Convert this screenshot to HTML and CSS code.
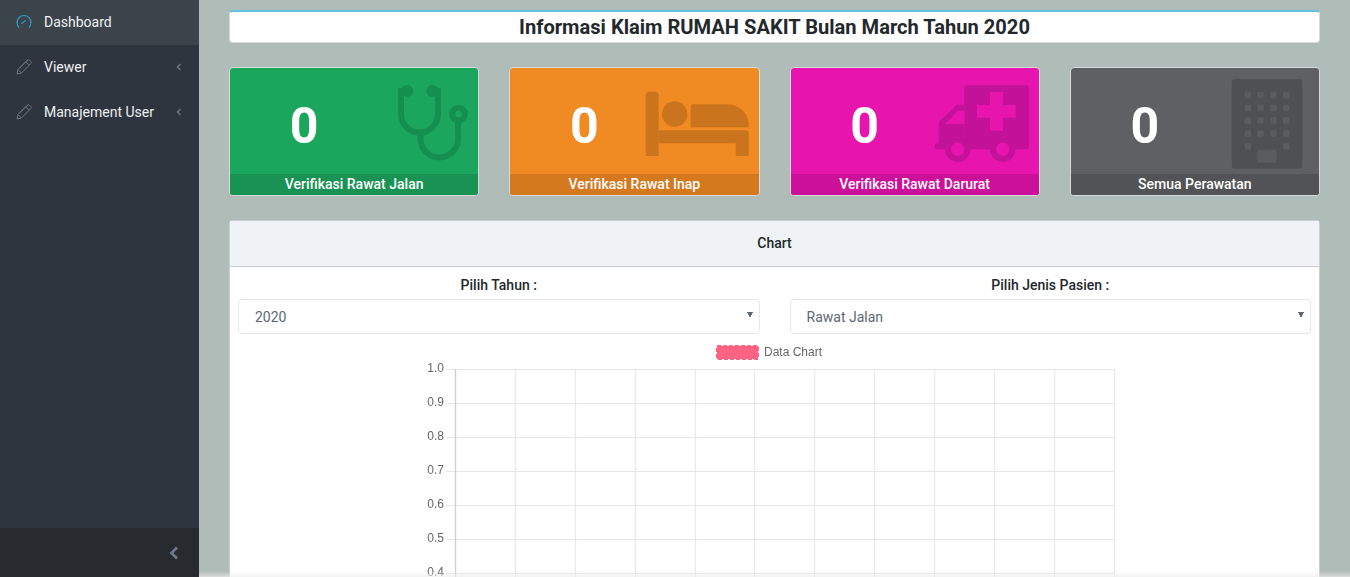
FILE: index.html
```html
<!DOCTYPE html>
<html lang="en">
<head>
  <meta charset="UTF-8">
  <title>Dashboard Klaim</title>
  <link rel="stylesheet" href="styles.css">
</head>
<body>
<div class="app">
  <!-- sidebar -->
  <aside class="sidebar">
    <nav class="nav">
      <a class="nav-link active" href="#">
        <svg class="nav-icon" viewBox="0 0 16 16"><path d="M3.2 13.6A7 7 0 1 1 12.8 13.6"/><path d="M5.5 9.8 9.8 6.4" /><path d="M3.6 2.9 4.2 3.6M8 1V2M1 8H2M14 8H15"/></svg>
        <span>Dashboard</span>
      </a>
      <a class="nav-link" href="#">
        <svg class="nav-icon" viewBox="0 0 16 16"><path d="M1 15 2 10.6 11.4 1.2A1.5 1.5 0 0 1 13.5 1.2L14.8 2.5A1.5 1.5 0 0 1 14.8 4.6L5.4 14Z"/><path d="M2 10.6 5.4 14M10 2.8 13.2 6M3.4 9.2 11.6 1"/></svg>
        <span>Viewer</span>
        <svg class="nav-caret" viewBox="0 0 6 8"><path d="M4.5 1 1.5 4 4.5 7"/></svg>
      </a>
      <a class="nav-link" href="#">
        <svg class="nav-icon" viewBox="0 0 16 16"><path d="M1 15 2 10.6 11.4 1.2A1.5 1.5 0 0 1 13.5 1.2L14.8 2.5A1.5 1.5 0 0 1 14.8 4.6L5.4 14Z"/><path d="M2 10.6 5.4 14M10 2.8 13.2 6M3.4 9.2 11.6 1"/></svg>
        <span>Manajement User</span>
        <svg class="nav-caret" viewBox="0 0 6 8"><path d="M4.5 1 1.5 4 4.5 7"/></svg>
      </a>
    </nav>
    <div class="sidebar-toggle">
      <svg viewBox="0 0 10 14"><path d="M8 1.5 2.5 7 8 12.5"/></svg>
    </div>
  </aside>

  <main class="main">
    <div class="title-box">Informasi Klaim RUMAH SAKIT Bulan March Tahun 2020</div>

    <!-- ringkasan -->
    <section class="cards">
      <div class="card green">
        <div class="card-body">
          <div class="card-value">0</div>
          <svg class="card-icon" viewBox="0 0 116 106">
            <g fill="none" stroke="#158f50" stroke-width="6">
              <path d="M44 23H38V46A18.5 18.5 0 0 0 75 46V23H69"/>
              <path d="M57.5 64V72A18.8 18.8 0 0 0 95 72V54"/>
              <circle cx="95.5" cy="46" r="6.3"/>
            </g>
            <circle cx="44.3" cy="23" r="6" fill="#158f50"/>
            <circle cx="69.3" cy="23" r="6" fill="#158f50"/>
          </svg>
        </div>
        <div class="card-footer">Verifikasi Rawat Jalan</div>
      </div>

      <div class="card orange">
        <div class="card-body">
          <div class="card-value">0</div>
          <svg class="card-icon" viewBox="0 0 116 106" fill="#ca751d">
            <path d="M1.7 26.7A3 3 0 0 1 4.7 23.7H11.7A3 3 0 0 1 14.7 26.7V88H1.7Z"/>
            <circle cx="30.7" cy="46" r="12.7"/>
            <path d="M46.7 39A2.7 2.7 0 0 1 49.4 36.3H84A20.7 20.7 0 0 1 104.7 57V59.3H46.7Z"/>
            <path d="M14.7 62.3H102A2.7 2.7 0 0 1 104.7 65V88H91.7V75.3H14.7Z"/>
          </svg>
        </div>
        <div class="card-footer">Verifikasi Rawat Inap</div>
      </div>

      <div class="card magenta">
        <div class="card-body">
          <div class="card-value">0</div>
          <svg class="card-icon" viewBox="0 0 116 106">
            <path fill="#c4119a" d="M40.3 20.3A3 3 0 0 1 43.3 17.3H102A3 3 0 0 1 105 20.3V78.3A3 3 0 0 1 102 81.3H40.3Z"/>
            <path fill="#c4119a" d="M40.3 36.7H32.7L14.7 54V75.3H13.7A3 3 0 0 0 13.7 81.3H40.3Z"/>
            <path fill="#e714ae" d="M66 24H79V37H91.7V49.7H79V62.7H66V49.7H53V37H66Z"/>
            <path fill="#e714ae" d="M40.3 43V56H21L33.7 43Z"/>
            <circle cx="33.7" cy="81.3" r="9.7" fill="#e714ae" stroke="#c4119a" stroke-width="6"/>
            <circle cx="78.7" cy="81.3" r="9.7" fill="#e714ae" stroke="#c4119a" stroke-width="6"/>
          </svg>
        </div>
        <div class="card-footer">Verifikasi Rawat Darurat</div>
      </div>

      <div class="card grey">
        <div class="card-body">
          <div class="card-value">0</div>
          <svg class="card-icon" viewBox="0 0 116 106">
            <rect x="27.7" y="11" width="70.6" height="89.7" rx="3" fill="#4f5053"/>
            <g fill="#5b5c5f">
              <rect x="40.7" y="23.7" width="6.4" height="6.4" rx="1.5"/><rect x="53.3" y="23.7" width="6.4" height="6.4" rx="1.5"/><rect x="66.3" y="23.7" width="6.4" height="6.4" rx="1.5"/><rect x="79" y="23.7" width="6.4" height="6.4" rx="1.5"/>
              <rect x="40.7" y="36.7" width="6.4" height="6.4" rx="1.5"/><rect x="53.3" y="36.7" width="6.4" height="6.4" rx="1.5"/><rect x="66.3" y="36.7" width="6.4" height="6.4" rx="1.5"/><rect x="79" y="36.7" width="6.4" height="6.4" rx="1.5"/>
              <rect x="40.7" y="49.3" width="6.4" height="6.4" rx="1.5"/><rect x="53.3" y="49.3" width="6.4" height="6.4" rx="1.5"/><rect x="66.3" y="49.3" width="6.4" height="6.4" rx="1.5"/><rect x="79" y="49.3" width="6.4" height="6.4" rx="1.5"/>
              <rect x="40.7" y="62.3" width="6.4" height="6.4" rx="1.5"/><rect x="53.3" y="62.3" width="6.4" height="6.4" rx="1.5"/><rect x="66.3" y="62.3" width="6.4" height="6.4" rx="1.5"/><rect x="79" y="62.3" width="6.4" height="6.4" rx="1.5"/>
              <rect x="40.7" y="75" width="6.4" height="6.4" rx="1.5"/><rect x="79" y="75" width="6.4" height="6.4" rx="1.5"/>
              <rect x="53.3" y="81.7" width="19.4" height="13" rx="2"/>
            </g>
          </svg>
        </div>
        <div class="card-footer">Semua Perawatan</div>
      </div>
    </section>

    <!-- chart -->
    <section class="panel">
      <div class="panel-header">Chart</div>
      <div class="panel-body">
        <div class="filters">
          <div class="filter">
            <label for="tahun">Pilih Tahun :</label>
            <select id="tahun"><option>2020</option></select>
          </div>
          <div class="filter">
            <label for="jenis">Pilih Jenis Pasien :</label>
            <select id="jenis"><option>Rawat Jalan</option></select>
          </div>
        </div>
        <svg class="chart" width="710" height="240" viewBox="0 0 710 240">
          <rect class="legend-box" x="302" y="6" width="41" height="13"/>
          <text class="legend" x="349" y="16">Data Chart</text>
          <g class="grid">
            <path d="M31 29.5H699.5M31 63.5H699.5M31 97.5H699.5M31 131.5H699.5M31 165.5H699.5M31 199.5H699.5M31 233.5H699.5"/>
            <path class="grid-v" d="M100.5 29V240M160.5 29V240M220.5 29V240M280.5 29V240M339.5 29V240M399.5 29V240M459.5 29V240M519.5 29V240M579.5 29V240M639.5 29V240M699.5 29V240"/>
          </g>
          <path class="axis" d="M40.5 29V240"/>
          <g class="ticks">
            <text x="29" y="32">1.0</text>
            <text x="29" y="66">0.9</text>
            <text x="29" y="100">0.8</text>
            <text x="29" y="134">0.7</text>
            <text x="29" y="168">0.6</text>
            <text x="29" y="202">0.5</text>
            <text x="29" y="236">0.4</text>
          </g>
        </svg>
      </div>
    </section>
  </main>
</div>
</body>
</html>
```

FILE: styles.css
```css
* {
  box-sizing: border-box;
}
html, body {
  margin: 0;
  height: 100%;
  overflow: hidden;
}
body {
  font-family: Roboto, "Liberation Sans", sans-serif;
  font-size: 14px;
  color: #23282c;
  background-color: #b0bcb7;
}
.app {
  display: flex;
  height: 100vh;
}

/* sidebar */
.sidebar {
  width: 199px;
  flex-shrink: 0;
  display: flex;
  flex-direction: column;
  background-color: #2f353e;
}
.nav {
  flex: 1;
}
.nav-link {
  display: flex;
  align-items: center;
  height: 45px;
  padding: 0 16px 2px;
  color: #eef0f2;
  text-decoration: none;
}
.nav-link span {
  flex: 1;
  margin-left: 12px;
}
.nav-link.active {
  background-color: #3b434b;
}
.nav-icon {
  width: 16px;
  height: 16px;
  fill: none;
  stroke: #6c757d;
  stroke-width: 1;
}
.nav-link.active .nav-icon {
  stroke: #2a9cc4;
  stroke-width: 1.2;
}
.nav-caret {
  width: 6px;
  height: 8px;
  margin-right: 1px;
  fill: none;
  stroke: #6c757d;
  stroke-width: 1.5;
}
.sidebar-toggle {
  display: flex;
  align-items: center;
  justify-content: flex-end;
  height: 49px;
  padding-right: 20px;
  background-color: #272a2e;
}
.sidebar-toggle svg {
  width: 10px;
  height: 14px;
  fill: none;
  stroke: #6c7a89;
  stroke-width: 2.8;
}

/* main */
.main {
  position: relative;
  flex: 1;
  min-width: 0;
  padding: 10px 30px 0;
}
.main::after {
  content: "";
  position: absolute;
  left: 0;
  right: 0;
  bottom: 0;
  height: 6px;
  background: linear-gradient(rgba(236, 236, 236, 0), rgba(236, 236, 236, .7));
}
.title-box {
  height: 33px;
  line-height: 30px;
  text-align: center;
  font-size: 20.1px;
  font-weight: 700;
  background-color: #fff;
  border: 1px solid #d5dbd8;
  border-top: 2px solid #63c2de;
  border-radius: 4px;
}

/* cards */
.cards {
  display: grid;
  grid-template-columns: repeat(4, 1fr);
  gap: 30px;
  margin-top: 24px;
}
.card {
  height: 129px;
  display: flex;
  flex-direction: column;
  overflow: hidden;
  color: #fff;
  border: 1px solid #d5dbd8;
  border-radius: 4px;
}
.card-body {
  flex: 1;
  display: flex;
  align-items: center;
  justify-content: space-between;
}
.card-value {
  flex: 0 0 148px;
  margin-right: -16px;
  padding-top: 10px;
  text-align: center;
  font-size: 50px;
  font-weight: 700;
  line-height: 1;
}
.card-icon {
  width: 116px;
  height: 106px;
  flex-shrink: 0;
  margin-right: -1px;
}
.card-footer {
  height: 21px;
  line-height: 21px;
  text-align: center;
  font-weight: 500;
}
.green { background-color: #1aa65d; }
.green .card-footer { background-color: #189353; }
.orange { background-color: #f08a22; }
.orange .card-footer { background-color: #d5791f; }
.magenta { background-color: #e714ae; }
.magenta .card-footer { background-color: #cc109a; }
.grey { background-color: #5e6063; }
.grey .card-footer { background-color: #525356; }

/* panel */
.panel {
  margin-top: 24px;
  background-color: #fff;
  border: 1px solid #c8ced3;
  border-bottom: 0;
  border-radius: 4px 4px 0 0;
}
.panel-header {
  height: 46px;
  line-height: 45px;
  text-align: center;
  font-weight: 500;
  background-color: #eff3f6;
  border-bottom: 1px solid #c8ced3;
}
.panel-body {
  padding: 8px;
}
.filters {
  display: grid;
  grid-template-columns: 1fr 1fr;
  gap: 30px;
}
.filter label {
  display: block;
  height: 21px;
  line-height: 21px;
  margin-bottom: 3px;
  text-align: center;
  font-weight: 500;
}
.filter select {
  display: block;
  width: 100%;
  height: 35px;
  padding: 0 16px;
  font-family: inherit;
  font-size: 14px;
  color: #5c6873;
  appearance: none;
  background-color: #fff;
  background-image: linear-gradient(to top right, transparent 50%, #5c6873 50%), linear-gradient(to top left, transparent 50%, #5c6873 50%);
  background-size: 3px 6px;
  background-position: right 9px top 12px, right 6px top 12px;
  background-repeat: no-repeat;
  border: 1px solid #e4e7ea;
  border-radius: 4px;
}

/* chart */
.chart {
  display: block;
  margin: 6px 0 0 177px;
  font-family: "Liberation Sans", Arial, sans-serif;
  font-size: 12px;
  will-change: transform;
}
.legend-box {
  fill: #ff6384;
  stroke: #ff6384;
  stroke-width: 2;
  stroke-dasharray: 4 2;
}
.legend {
  fill: #666;
}
.grid path {
  fill: none;
  stroke: #e6e6e6;
}
.grid .grid-v {
  stroke: #e9e9e9;
  stroke-width: 1.4;
}
.axis {
  fill: none;
  stroke: #cfcfcf;
  stroke-width: 1.4;
}
.ticks text {
  fill: #666;
  text-anchor: end;
}
```
